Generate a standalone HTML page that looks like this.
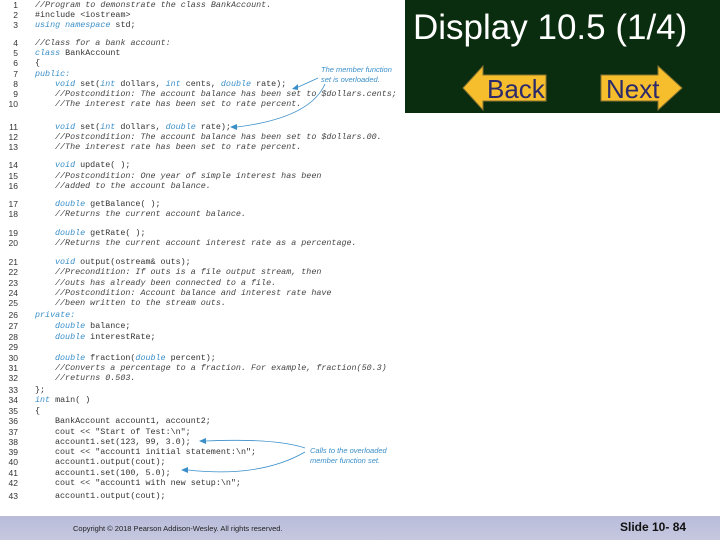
<!DOCTYPE html>
<html><head><meta charset="utf-8"><style>
body{margin:0;width:720px;height:540px;background:#fff;position:relative;overflow:hidden;font-family:"Liberation Sans",sans-serif}
.l{position:absolute;font-family:"Liberation Mono",monospace;font-size:8.4px;color:#333;white-space:pre;line-height:10px}
.n{position:absolute;left:8px;width:10px;text-align:right;font-family:"Liberation Sans",sans-serif;font-size:8.5px;color:#333;line-height:10px}
i{font-style:italic}
.k{color:#3a8fc9;font-style:italic}
.c{font-style:italic;color:#444}
#g{position:absolute;left:405px;top:0;width:315px;height:113px;background:#0b2d0f}
#t{position:absolute;left:413px;top:8px;font-size:35px;color:#fff}
#f{position:absolute;left:0;top:516px;width:720px;height:24px;background:linear-gradient(#b9bcda,#c6c8e0)}
.ann{position:absolute;font-family:"Liberation Sans",sans-serif;font-style:italic;font-size:7.5px;color:#3a8fc9;line-height:10px}
</style></head><body>
<div id="g"></div>
<div id="t">Display 10.5 (1/4)</div>
<svg style="position:absolute;left:460px;top:64px" width="230" height="50">
<polygon points="3,24 23,2 23,11 86,11 86,37 23,37 23,46" fill="#f6bd2c" stroke="#8a7430" stroke-width="1"/>
<polygon points="141,11 198,11 198,2 222,24 198,46 198,37 141,37" fill="#f6bd2c" stroke="#8a7430" stroke-width="1"/>
<text x="27" y="34" font-family="Liberation Sans" font-size="26" fill="#2c2a6b">Back</text>
<text x="146" y="34" font-family="Liberation Sans" font-size="26" fill="#2c2a6b">Next</text>
</svg>
<div class="n" style="top:0">1</div><div class="l" style="left:35px;top:0"><span class="c">//Program to demonstrate the class BankAccount.</span></div>
<div class="n" style="top:10px">2</div><div class="l" style="left:35px;top:10px">#include &lt;iostream&gt;</div>
<div class="n" style="top:20px">3</div><div class="l" style="left:35px;top:20px"><span class="k">using namespace</span> std;</div>
<div class="n" style="top:38px">4</div><div class="l" style="left:35px;top:38px"><span class="c">//Class for a bank account:</span></div>
<div class="n" style="top:48px">5</div><div class="l" style="left:35px;top:48px"><span class="k">class</span> BankAccount</div>
<div class="n" style="top:58px">6</div><div class="l" style="left:35px;top:58px">{</div>
<div class="n" style="top:69px">7</div><div class="l" style="left:35px;top:69px"><span class="k">public:</span></div>
<div class="n" style="top:79px">8</div><div class="l" style="left:55px;top:79px"><span class="k">void</span> set(<span class="k">int</span> dollars, <span class="k">int</span> cents, <span class="k">double</span> rate);</div>
<div class="n" style="top:89px">9</div><div class="l" style="left:55px;top:89px"><span class="c">//Postcondition: The account balance has been set to $dollars.cents;</span></div>
<div class="n" style="top:99px">10</div><div class="l" style="left:55px;top:99px"><span class="c">//The interest rate has been set to rate percent.</span></div>
<div class="n" style="top:122px">11</div><div class="l" style="left:55px;top:122px"><span class="k">void</span> set(<span class="k">int</span> dollars, <span class="k">double</span> rate);</div>
<div class="n" style="top:132px">12</div><div class="l" style="left:55px;top:132px"><span class="c">//Postcondition: The account balance has been set to $dollars.00.</span></div>
<div class="n" style="top:142px">13</div><div class="l" style="left:55px;top:142px"><span class="c">//The interest rate has been set to rate percent.</span></div>
<div class="n" style="top:160px">14</div><div class="l" style="left:55px;top:160px"><span class="k">void</span> update( );</div>
<div class="n" style="top:171px">15</div><div class="l" style="left:55px;top:171px"><span class="c">//Postcondition: One year of simple interest has been</span></div>
<div class="n" style="top:181px">16</div><div class="l" style="left:55px;top:181px"><span class="c">//added to the account balance.</span></div>
<div class="n" style="top:199px">17</div><div class="l" style="left:55px;top:199px"><span class="k">double</span> getBalance( );</div>
<div class="n" style="top:209px">18</div><div class="l" style="left:55px;top:209px"><span class="c">//Returns the current account balance.</span></div>
<div class="n" style="top:228px">19</div><div class="l" style="left:55px;top:228px"><span class="k">double</span> getRate( );</div>
<div class="n" style="top:238px">20</div><div class="l" style="left:55px;top:238px"><span class="c">//Returns the current account interest rate as a percentage.</span></div>
<div class="n" style="top:257px">21</div><div class="l" style="left:55px;top:257px"><span class="k">void</span> output(ostream&amp; outs);</div>
<div class="n" style="top:267px">22</div><div class="l" style="left:55px;top:267px"><span class="c">//Precondition: If outs is a file output stream, then</span></div>
<div class="n" style="top:278px">23</div><div class="l" style="left:55px;top:278px"><span class="c">//outs has already been connected to a file.</span></div>
<div class="n" style="top:288px">24</div><div class="l" style="left:55px;top:288px"><span class="c">//Postcondition: Account balance and interest rate have</span></div>
<div class="n" style="top:298px">25</div><div class="l" style="left:55px;top:298px"><span class="c">//been written to the stream outs.</span></div>
<div class="n" style="top:310px">26</div><div class="l" style="left:35px;top:310px"><span class="k">private:</span></div>
<div class="n" style="top:321px">27</div><div class="l" style="left:55px;top:321px"><span class="k">double</span> balance;</div>
<div class="n" style="top:332px">28</div><div class="l" style="left:55px;top:332px"><span class="k">double</span> interestRate;</div>
<div class="n" style="top:342px">29</div>
<div class="n" style="top:353px">30</div><div class="l" style="left:55px;top:353px"><span class="k">double</span> fraction(<span class="k">double</span> percent);</div>
<div class="n" style="top:363px">31</div><div class="l" style="left:55px;top:363px"><span class="c">//Converts a percentage to a fraction. For example, fraction(50.3)</span></div>
<div class="n" style="top:373px">32</div><div class="l" style="left:55px;top:373px"><span class="c">//returns 0.503.</span></div>
<div class="n" style="top:385px">33</div><div class="l" style="left:35px;top:385px">};</div>
<div class="n" style="top:395px">34</div><div class="l" style="left:35px;top:395px"><span class="k">int</span> main( )</div>
<div class="n" style="top:406px">35</div><div class="l" style="left:35px;top:406px">{</div>
<div class="n" style="top:416px">36</div><div class="l" style="left:55px;top:416px">BankAccount account1, account2;</div>
<div class="n" style="top:427px">37</div><div class="l" style="left:55px;top:427px">cout &lt;&lt; "Start of Test:\n";</div>
<div class="n" style="top:437px">38</div><div class="l" style="left:55px;top:437px">account1.set(123, 99, 3.0);</div>
<div class="n" style="top:447px">39</div><div class="l" style="left:55px;top:447px">cout &lt;&lt; "account1 initial statement:\n";</div>
<div class="n" style="top:457px">40</div><div class="l" style="left:55px;top:457px">account1.output(cout);</div>
<div class="n" style="top:468px">41</div><div class="l" style="left:55px;top:468px">account1.set(100, 5.0);</div>
<div class="n" style="top:478px">42</div><div class="l" style="left:55px;top:478px">cout &lt;&lt; "account1 with new setup:\n";</div>
<div class="n" style="top:491px">43</div><div class="l" style="left:55px;top:491px">account1.output(cout);</div>
<div class="ann" style="left:321px;top:65px">The member function<br>set is overloaded.</div>
<div class="ann" style="left:310px;top:446px">Calls to the overloaded<br>member function set.</div>
<svg style="position:absolute;left:0;top:0" width="720" height="540">
<g fill="none" stroke="#3a8fc9" stroke-width="0.8">
<path d="M318,78 Q305,84 296,88"/><path d="M325,84 Q310,118 237,127"/>
<path d="M305,448 Q275,438 206,441"/><path d="M305,452 Q260,478 188,470"/>
</g>
<g fill="#3a8fc9"><polygon points="292,89 298,84 298,90"/><polygon points="230,127 237,124 237,130"/>
<polygon points="199,441 206,438 206,444"/><polygon points="181,470 188,467 188,473"/></g>
</svg>
<div id="f"></div>
<div style="position:absolute;left:73px;top:524px;font-size:7.5px;color:#222">Copyright © 2018 Pearson Addison-Wesley.  All rights reserved.</div>
<div style="position:absolute;left:620px;top:520px;font-size:12px;font-weight:bold;color:#111">Slide 10- 84</div>
</body></html>
